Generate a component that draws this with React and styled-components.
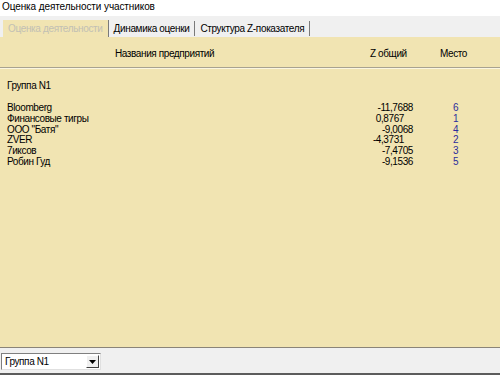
import React from "react";
import styled, { createGlobalStyle } from "styled-components";

const Global = createGlobalStyle`
  html, body { margin: 0; padding: 0; }
  body { font-family: "Liberation Sans", Arial, sans-serif; font-size: 10px; color: #000; }
`;

const Window = styled.div`
  width: 500px;
  height: 375px;
  display: flex;
  flex-direction: column;
  background: #ffffff;
  overflow: hidden;
`;

const Title = styled.div`
  height: 16px;
  line-height: 14px;
  padding-left: 2px;
  font-size: 10px;
  letter-spacing: -0.1px;
  background: #ffffff;
`;

const TabStrip = styled.div`
  height: 21px;
  display: flex;
  align-items: flex-end;
  padding-left: 3px;
  background: #f0f0f0;
`;

const Tab = styled.div`
  height: ${(p) => (p.$active ? "17px" : "15px")};
  line-height: ${(p) => (p.$active ? "18px" : "16px")};
  padding: 0 5px;
  font-size: 10px;
  letter-spacing: -0.35px;
  background: ${(p) => (p.$active ? "#f1e4b2" : "transparent")};
  color: ${(p) => (p.$active ? "#c2c0b4" : "#000")};
  border-right: 1px solid #7a7a7a;
  margin-bottom: ${(p) => (p.$active ? "0" : "1px")};
`;

const Panel = styled.div`
  flex: 1;
  background: #f1e4b2;
  border-bottom: 1px solid #8a8478;
  display: flex;
  flex-direction: column;
  letter-spacing: -0.4px;
`;

const HeaderRow = styled.div`
  height: 30px;
  display: grid;
  grid-template-columns: 370px 70px 1fr;
  align-items: center;
  border-bottom: 1px solid #a8a290;
  box-shadow: 0 1px 0 #fbf6e0;
`;

const HeaderCell = styled.div`
  padding-left: ${(p) => p.$pad || 0}px;
  padding-top: 2px;
`;

const Group = styled.div`
  padding: 12px 0 0 7px;
  height: 19px;
  line-height: 12px;
`;

const DataRow = styled.div`
  display: grid;
  grid-template-columns: 1fr 45px 87px;
  height: 10.8px;
  line-height: 11px;
`;

const Name = styled.div`
  padding-left: 7px;
  white-space: nowrap;
`;

const Z = styled.div`
  text-align: right;
  padding-right: ${(p) => p.$shift || 0}px;
  white-space: nowrap;
`;

const Place = styled.div`
  padding-left: 40px;
  color: #2c2c9c;
`;

const Rows = styled.div`
  padding-top: 3px;
`;

const BottomBar = styled.div`
  height: 25px;
  background: #f0f0f0;
  border-bottom: 2px solid #5c5c5c;
  display: flex;
  align-items: center;
  letter-spacing: -0.4px;
`;

const Combo = styled.div`
  width: 98px;
  height: 15px;
  margin-left: 1px;
  margin-top: 2px;
  background: #fff;
  border-top: 1px solid #7f7f7f;
  border-left: 1px solid #7f7f7f;
  border-right: 1px solid #e0e0e0;
  border-bottom: 1px solid #e0e0e0;
  display: flex;
  align-items: center;
  justify-content: space-between;
  box-sizing: content-box;
`;

const ComboText = styled.span`
  padding-left: 3px;
  line-height: 15px;
`;

const ComboButton = styled.div`
  width: 13px;
  height: 13px;
  margin-right: 1px;
  background: #f0f0f0;
  border-top: 1px solid #ffffff;
  border-left: 1px solid #ffffff;
  border-right: 1px solid #404040;
  border-bottom: 1px solid #404040;
  box-sizing: border-box;
  display: flex;
  align-items: center;
  justify-content: center;
`;

const rows = [
  { name: "Bloomberg", z: "-11,7688", place: 6 },
  { name: "Финансовые тигры", z: "0,8767", place: 1, shift: 9 },
  { name: 'ООО "Батя"', z: "-9,0068", place: 4 },
  { name: "ZVER", z: "-4,3731", place: 2, shift: 9 },
  { name: "7иксов", z: "-7,4705", place: 3 },
  { name: "Робин Гуд", z: "-9,1536", place: 5 },
];

export default function App() {
  return (
    <>
      <Global />
      <Window>
        <Title>Оценка деятельности участников</Title>
        <TabStrip>
          <Tab $active>Оценка деятельности</Tab>
          <Tab>Динамика оценки</Tab>
          <Tab>Структура Z-показателя</Tab>
        </TabStrip>
        <Panel>
          <HeaderRow>
            <HeaderCell $pad={115}>Названия предприятий</HeaderCell>
            <HeaderCell>Z общий</HeaderCell>
            <HeaderCell>Место</HeaderCell>
          </HeaderRow>
          <Group>Группа N1</Group>
          <Rows>
            {rows.map((r) => (
              <DataRow key={r.name}>
                <Name>{r.name}</Name>
                <Z $shift={r.shift}>{r.z}</Z>
                <Place>{r.place}</Place>
              </DataRow>
            ))}
          </Rows>
        </Panel>
        <BottomBar>
          <Combo>
            <ComboText>Группа N1</ComboText>
            <ComboButton>
              <svg width="7" height="4" viewBox="0 0 7 4">
                <path d="M0 0h7L3.5 4z" fill="#000" />
              </svg>
            </ComboButton>
          </Combo>
        </BottomBar>
      </Window>
    </>
  );
}
